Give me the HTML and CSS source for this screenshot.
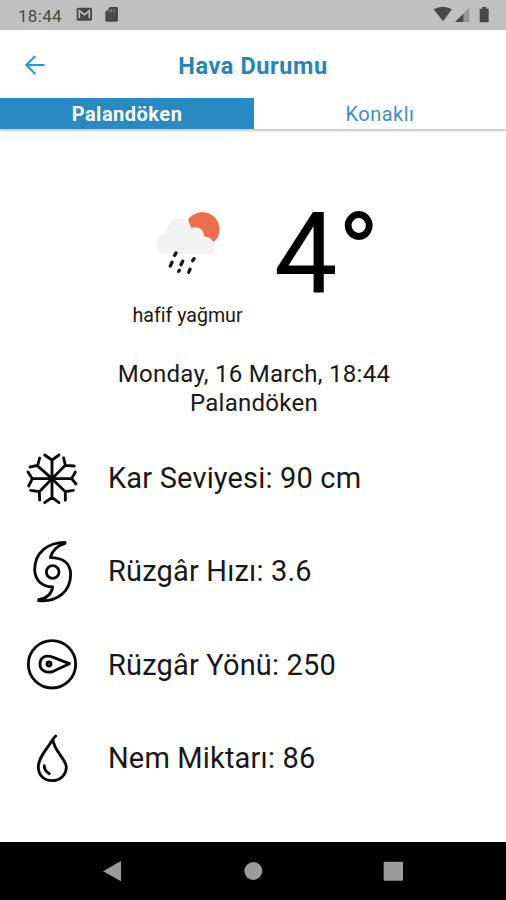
FILE: index.html
```html
<!DOCTYPE html>
<html lang="tr">
<head>
<meta charset="utf-8">
<title>Hava Durumu</title>
<link rel="stylesheet" href="styles.css">
</head>
<body>
<div class="screen">
  <div class="status">
    <span class="clock">18:44</span>
    <svg class="notices" width="44" height="18" viewBox="0 0 132 54">
      <rect x="2" y="5" width="46" height="39" rx="5" fill="#484848"/>
      <path d="M10 37V14L25 26L40 14V37" fill="none" stroke="#c0c0c0" stroke-width="5"/>
      <path d="M102 3h20q4 0 4 4v36q0 4-4 4H92q-4 0-4-4V18z" fill="#484848"/>
      <path d="M98 10v9M106 10v9M114 10v9" stroke="#999" stroke-width="3"/>
    </svg>
    <svg class="signals" width="58" height="18" viewBox="0 0 174 54">
      <path d="M2 10Q29-6 57 10L30 46z" fill="#484848"/>
      <path d="M109 5V48H66z" fill="#969696"/>
      <path d="M91 23V48H66z" fill="#484848"/>
      <path d="M148 3h12v5h7v41h-27V8h8z" fill="#484848"/>
    </svg>
  </div>
  <header class="header">
    <svg class="back" width="22" height="22" viewBox="0 0 66 66"><path d="M62 33H7M34 6L7 33L34 60" fill="none" stroke="#2196f3" stroke-width="6"/></svg>
    <h1 class="title">Hava Durumu</h1>
  </header>
  <nav class="tabs">
    <div class="tab active"><span>Palandöken</span></div>
    <div class="tab"><span>Konaklı</span></div>
  </nav>
  <main>
    <section class="current">
      <div class="condition">
        <svg width="70" height="72" viewBox="97 52 210 216">
          <path d="M205 87C226 57 272 57 291 87C306 110 300 137 284 153L250 140L215 112z" fill="#ec6e4c"/>
          <path d="M131 190C102 183 102 136 140 128C145 79 193 65 214 113C235 104 254 117 253 137C276 139 286 156 285 173Q282 190 266 190z" fill="#f2f2f2"/>
          <path d="M169 187l-4 7M157 215l-5 11M189 212l-5 10M223 204l-4 6M179 239l-2 3M211 236l-4 9" stroke="#151515" stroke-width="10" stroke-linecap="round"/>
        </svg>
        <span class="caption">hafif yağmur</span>
      </div>
      <span class="temp">4°</span>
    </section>
    <section class="place"><div class="date">Monday, 16 March, 18:44</div><div class="town">Palandöken</div></section>
    <section class="details">
      <div class="row">
        <svg class="icon" viewBox="0 -10 252 252">
          <path d="M126 115V59M104 44L126 59L147 44M126 115V171M104 187L126 171L147 187M126 115H67M54 95L67 115L56 137M126 115H185M196 95L185 115L198 131"/>
          <path d="M126 115L81 75M89 53L83 75L60 80M126 115L166 75M161 53L166 75L193 77M126 115L88 154M62 150L88 154L89 179M126 115L166 154M190 150L166 154L166 180"/>
          <circle cx="126" cy="115" r="6"/>
        </svg><span>Kar Seviyesi: 90 cm</span>
      </div>
      <div class="row">
        <svg class="icon" viewBox="0 0 252 252">
          <circle cx="128" cy="126" r="19"/>
          <path d="M165 37C113 37 74 68 74 119C75 151 96 170 128 171Q123 203 86 209V212C143 217 182 184 182 132C181 101 160 83 121 83Q130 49 165 40z"/>
        </svg><span>Rüzgâr Hızı: 3.6</span>
      </div>
      <div class="row">
        <svg class="icon" viewBox="0 -20 252 252">
          <circle cx="126" cy="104" r="71"/>
          <path d="M178 102L130 83C104 73 90 85 90 104C90 123 109 132 130 125z"/>
          <circle cx="117" cy="103" r="6"/>
        </svg><span>Rüzgâr Yönü: 250</span>
      </div>
      <div class="row">
        <svg class="icon" viewBox="0 -25 252 252">
          <path d="M137 32L128 42C114 69 85 93 85 125C85 151 103 166 126 166C151 166 169 148 169 124C166 98 130 75 129 42"/>
          <path d="M103 121Q102 136 118 145"/>
        </svg><span>Nem Miktarı: 86</span>
      </div>
    </section>
  </main>
  <footer class="navbar">
    <svg width="22" height="24" viewBox="0 0 66 72"><path d="M60 6V67L6 37z"/></svg>
    <svg width="22" height="24" viewBox="0 0 66 72"><circle cx="34" cy="36" r="27"/></svg>
    <svg width="22" height="24" viewBox="0 0 66 72"><rect x="5" y="8" width="58" height="57" rx="3"/></svg>
  </footer>
</div>
</body>
</html>
```
FILE: styles.css
```css
* { box-sizing: border-box; }
body { margin: 0; background: #fff; font-family: Roboto, "Liberation Sans", sans-serif; color: #181818; }
svg { display: block; flex: none; }
.screen { width: 506px; height: 900px; display: flex; flex-direction: column; overflow: hidden; }
.status { height: 30px; flex: none; background: #c0c0c0; display: flex; align-items: center; padding: 0 15px 0 18px; }
.clock { font-size: 17px; color: #484848; width: 58px; letter-spacing: .3px; padding-top: 2px; }
.signals { margin-left: auto; }
.header { height: 68px; flex: none; display: grid; grid-template-columns: 48px 1fr 48px; align-items: center; padding-top: 2px; }
.back { margin-left: 24px; }
.title { margin: 2px 0 0; text-align: center; font-size: 23.5px; font-weight: 700; color: #2386b9; letter-spacing: .6px; }
.tabs { height: 31px; flex: none; display: flex; box-shadow: 0 2px 2px rgba(0,0,0,.22); }
.tab { flex: 1; display: flex; align-items: center; justify-content: center; font-size: 20px; letter-spacing: .5px; color: #3f8fc0; }
.active { flex: 0 0 254px; background: #278ac0; color: #fff; font-weight: 700; }
main { flex: 1; display: flex; flex-direction: column; }
.current { height: 231px; padding: 79px 0 0 132px; display: flex; }
.condition { width: 110px; display: flex; flex-direction: column; align-items: center; }
.caption { white-space: nowrap; font-size: 19.6px; line-height: 24px; margin: 24px 0 0 1px; }
.temp { font-size: 113px; line-height: 114px; margin: -10px 0 0 32px; color: #000; white-space: nowrap; }
.place { text-align: center; font-size: 24px; line-height: 29px; letter-spacing: .27px; padding-left: 2px; }
.details { flex: 1; padding: 14px 0 22px 10px; display: grid; grid-template-rows: repeat(4, 93.3px); }
.row { display: flex; align-items: center; gap: 14px; font-size: 29px; letter-spacing: .17px; }
.row span { margin-top: -1px; }
.icon { width: 84px; height: 84px; fill: none; stroke: #090909; stroke-width: 8.5; stroke-linecap: round; stroke-linejoin: round; }
.navbar { height: 58px; flex: none; background: #000; display: flex; justify-content: space-between; align-items: center; padding: 0 102px 0 101px; fill: #9b9b9b; }
```
